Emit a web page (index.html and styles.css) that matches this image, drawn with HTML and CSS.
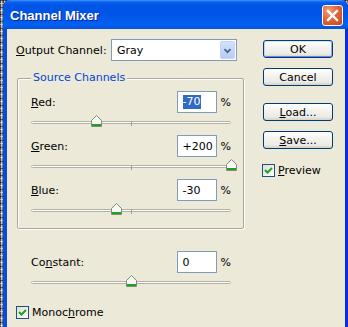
FILE: index.html
```html
<!DOCTYPE html>
<html>
<head>
<meta charset="utf-8">
<link rel="stylesheet" href="styles.css">
</head>
<body>
<div class="screen">
  <div class="window">
    <div class="titlebar">
      <span class="title">Channel Mixer</span>
      <span class="close"><svg width="19" height="19" viewBox="0 0 19 19"><path d="M5 5 L14 14 M14 5 L5 14" stroke="#fff" stroke-width="2.4" stroke-linecap="square"/></svg></span>
    </div>
    <div class="frame">
      <div class="main">
        <div class="output-row">
          <span class="out-label"><u>O</u>utput Channel:</span>
          <div class="select">
            <span class="select-text">Gray</span>
            <span class="drop"><svg width="15" height="19" viewBox="0 0 15 19"><path d="M4 8 L7.5 11.5 L11 8" fill="none" stroke="#4D6185" stroke-width="2"/></svg></span>
          </div>
        </div>
        <div class="group">
          <span class="legend">Source Channels</span>
          <div class="row">
            <span class="lbl"><u>R</u>ed:</span>
            <div class="field"><span class="sel">-70</span></div>
            <span class="pct">%</span>
          </div>
          <div class="slider"><div class="track"><span class="tick"></span><span class="thumb" style="left:65px"><svg width="11" height="12" viewBox="0 0 11 12"><path d="M0.5 5.5 L5.5 0.5 L10.5 5.5 L10.5 11.5 L0.5 11.5 Z" fill="#F7F7F4" stroke="#7D8C7D"/><rect x="1" y="9" width="9" height="2" fill="#21A121"/></svg></span></div></div>
          <div class="row">
            <span class="lbl"><u>G</u>reen:</span>
            <div class="field">+200</div>
            <span class="pct">%</span>
          </div>
          <div class="slider"><div class="track"><span class="tick"></span><span class="thumb" style="left:200px"><svg width="11" height="12" viewBox="0 0 11 12"><path d="M0.5 5.5 L5.5 0.5 L10.5 5.5 L10.5 11.5 L0.5 11.5 Z" fill="#F7F7F4" stroke="#7D8C7D"/><rect x="1" y="9" width="9" height="2" fill="#21A121"/></svg></span></div></div>
          <div class="row">
            <span class="lbl"><u>B</u>lue:</span>
            <div class="field">-30</div>
            <span class="pct">%</span>
          </div>
          <div class="slider"><div class="track"><span class="tick"></span><span class="thumb" style="left:85px"><svg width="11" height="12" viewBox="0 0 11 12"><path d="M0.5 5.5 L5.5 0.5 L10.5 5.5 L10.5 11.5 L0.5 11.5 Z" fill="#F7F7F4" stroke="#7D8C7D"/><rect x="1" y="9" width="9" height="2" fill="#21A121"/></svg></span></div></div>
        </div>
        <div class="constant">
          <div class="row">
            <span class="lbl">Co<u>n</u>stant:</span>
            <div class="field">0</div>
            <span class="pct">%</span>
          </div>
          <div class="slider"><div class="track"><span class="tick"></span><span class="thumb" style="left:100px"><svg width="11" height="12" viewBox="0 0 11 12"><path d="M0.5 5.5 L5.5 0.5 L10.5 5.5 L10.5 11.5 L0.5 11.5 Z" fill="#F7F7F4" stroke="#7D8C7D"/><rect x="1" y="9" width="9" height="2" fill="#21A121"/></svg></span></div></div>
        </div>
        <div class="check mono">
          <span class="cb"><svg width="11" height="11" viewBox="0 0 11 11"><path d="M2 5 L4.5 7.5 L9 3" fill="none" stroke="#21A121" stroke-width="2"/></svg></span>
          <span>Monoc<u>h</u>rome</span>
        </div>
      </div>
      <div class="side">
        <div class="btn default">OK</div>
        <div class="btn cancel">Cancel</div>
        <div class="btn load"><u>L</u>oad...</div>
        <div class="btn save"><u>S</u>ave...</div>
        <div class="check preview">
          <span class="cb"><svg width="11" height="11" viewBox="0 0 11 11"><path d="M2 5 L4.5 7.5 L9 3" fill="none" stroke="#21A121" stroke-width="2"/></svg></span>
          <span><u>P</u>review</span>
        </div>
      </div>
    </div>
  </div>
</div>
</body>
</html>
```
FILE: styles.css
```css
* { box-sizing: border-box; }
html, body { margin: 0; padding: 0; }
body {
  width: 348px;
  height: 327px;
  overflow: hidden;
  font-family: "DejaVu Sans", sans-serif;
  font-size: 11px;
  color: #000;
}
.screen {
  display: flex;
  width: 348px;
  height: 327px;
  padding-left: 3px;
  background:
    repeating-linear-gradient(180deg, rgba(0,0,0,0.5) 0 1px, transparent 1px 3px, rgba(255,255,255,0.5) 3px 4px, transparent 4px 7px),
    repeating-linear-gradient(90deg, #4a4a4a 0 1px, #c8c8c8 1px 2px, #7a7a7a 2px 3px);
}
.window {
  flex: 1;
  display: flex;
  flex-direction: column;
  border-radius: 7px 7px 0 0;
  overflow: hidden;
  background: #0831D9;
}
.titlebar {
  height: 29px;
  flex: none;
  display: flex;
  align-items: center;
  justify-content: space-between;
  padding: 0 5px 0 7px;
  background: linear-gradient(180deg, #3D95FF 0px, #0A61EE 2px, #0055E5 5px, #0055E8 50%, #0260F0 85%, #0553E0 100%);
}
.title {
  color: #fff;
  font: bold 13px "Liberation Sans", sans-serif;
  text-shadow: 1px 1px 0 #0F1F89;
  margin-top: 1px;
}
.close {
  width: 21px;
  height: 21px;
  margin-top: 2px;
  border: 1px solid #fff;
  border-radius: 3px;
  background: radial-gradient(circle at 30% 25%, #F0A080 0, #E0653C 45%, #C8431B 100%);
  display: flex;
  align-items: center;
  justify-content: center;
}
.close svg { display: block; }
.frame {
  flex: 1;
  display: flex;
  border-left: 4px solid #0A4BDC;
  border-right: 3px solid #0831D9;
  background: #ECE9D8;
  padding: 10px 0 0 9px;
}
.main {
  width: 229px;
  flex: none;
}
.output-row {
  display: flex;
  align-items: center;
  height: 22px;
}
.out-label { width: 95px; }
.select {
  width: 126px;
  height: 22px;
  border: 1px solid #7F9DB9;
  background: #fff;
  display: flex;
  align-items: center;
  justify-content: space-between;
  padding: 0 1px 0 5px;
}
.drop {
  width: 15px;
  height: 18px;
  border-radius: 2px;
  background: linear-gradient(180deg, #D4E1FD, #B8CBF8);
  border: 1px solid #C3D3FD;
  display: flex;
  align-items: center;
  justify-content: center;
}
.drop svg { display: block; }
.group {
  position: relative;
  margin: 17px 0 0 1px;
  width: 227px;
  height: 151px;
  border: 1px solid #ACA899;
  border-radius: 2px;
  box-shadow: 1px 1px 0 #fff, inset 1px 1px 0 #fff;
  padding: 12px 12px 5px 13px;
}
.legend {
  position: absolute;
  left: 13px;
  top: -8px;
  padding: 0 2px;
  background: #ECE9D8;
  color: #0046D5;
}
.row {
  display: flex;
  align-items: center;
  height: 22px;
  width: 200px;
}
.lbl { flex: 1; }
.field {
  width: 40px;
  height: 22px;
  border: 1px solid #7F9DB9;
  background: #fff;
  padding: 0 5px;
  display: flex;
  align-items: center;
}
.sel {
  background: #316AC5;
  color: #fff;
  line-height: 14px;
}
.pct { margin-left: 4px; }
.slider {
  height: 22px;
  width: 200px;
  padding-top: 8px;
}
.track {
  position: relative;
  height: 3px;
  border: 1px solid #B2B1A6;
  border-radius: 2px;
  background: #fff;
}
.tick {
  position: absolute;
  left: 99px;
  top: -1px;
  width: 1px;
  height: 5px;
  background: #9C9B91;
}
.thumb {
  position: absolute;
  top: -7px;
  width: 11px;
  height: 12px;
  margin-left: -6px;
}
.thumb svg { display: block; }
.constant {
  margin: 22px 0 0 15px;
  width: 200px;
}
.check {
  display: flex;
  align-items: center;
  gap: 3px;
}
.mono { margin-top: 11px; }
.cb {
  width: 13px;
  height: 13px;
  border: 1px solid #1C5180;
  background: linear-gradient(135deg, #DCDCD7, #fff);
  display: flex;
  align-items: center;
  justify-content: center;
}
.cb svg { display: block; }
.side {
  margin-left: 17px;
  width: 72px;
  flex: none;
  padding-left: 1px;
}
.btn {
  width: 70px;
  height: 18px;
  border: 1px solid #003C74;
  border-radius: 3px;
  background: linear-gradient(180deg, #fff 0%, #F4F3EE 40%, #ECEBE6 80%, #D6D0C5 100%);
  display: flex;
  align-items: center;
  justify-content: center;
}
.btn.default {
  margin-top: 1px;
  box-shadow: inset 0 1px 0 #CEE7FF, inset 1px 0 0 #BCD4F6, inset -1px 0 0 #89ADE4, inset 0 -1px 0 #6982EE;
}
.cancel { margin-top: 10px; }
.load { margin-top: 17px; }
.save { margin-top: 10px; }
.preview { margin-top: 15px; margin-left: -1px; }
```
